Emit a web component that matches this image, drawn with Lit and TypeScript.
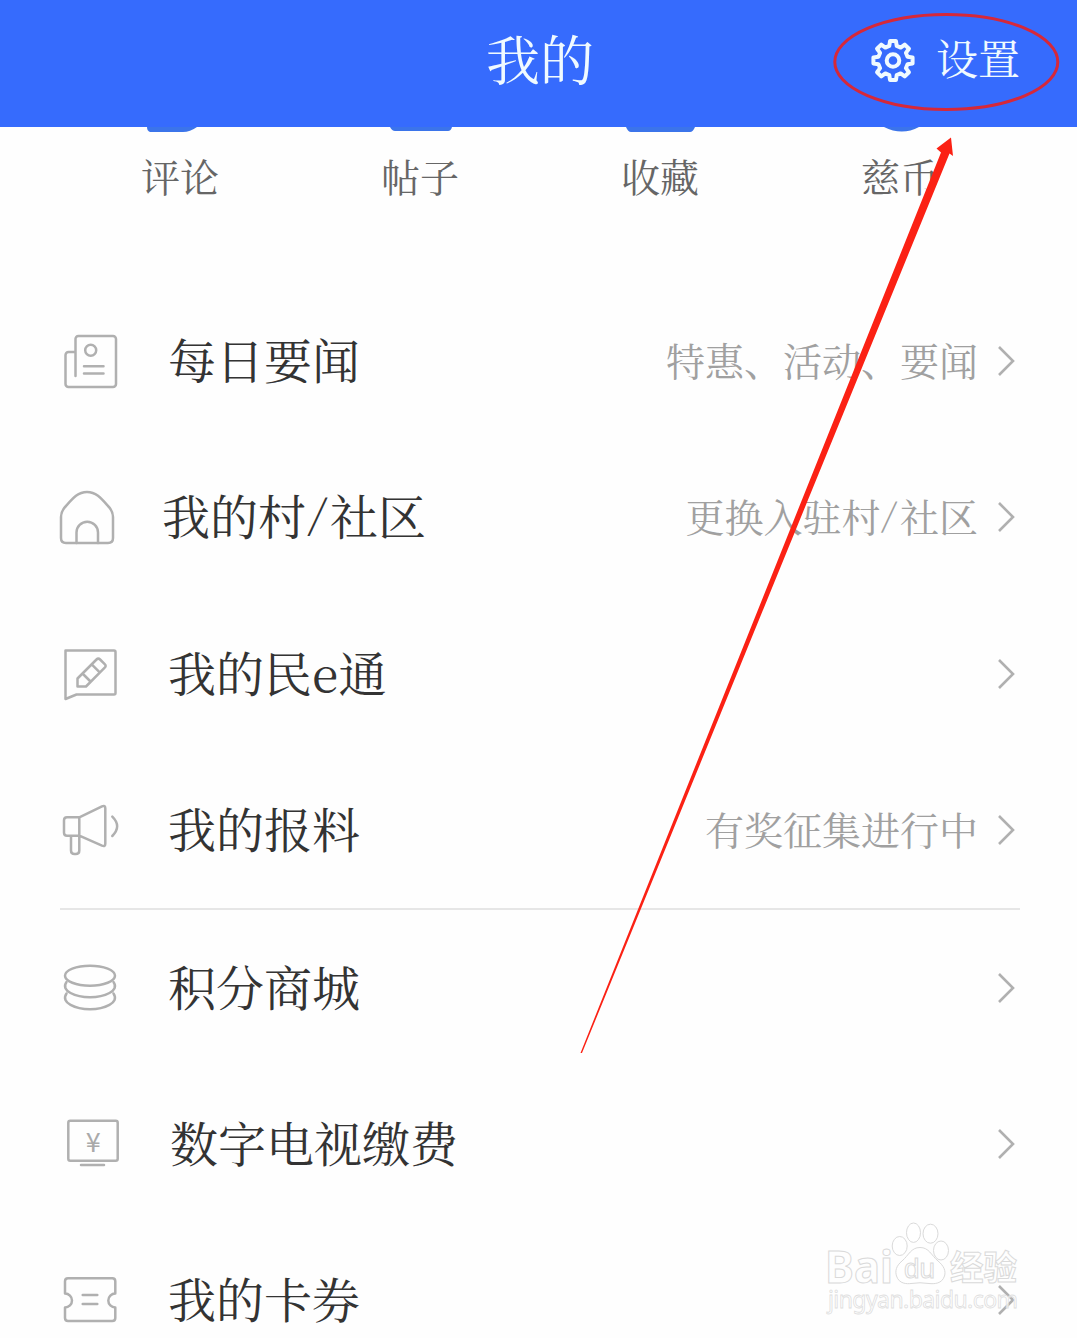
import { LitElement, html, css, svg } from "lit";
import { customElement } from "lit/decorators.js";

const gearPath = (cx: number, cy: number, outer: number, inner: number): string => {
  const points: string[] = [];
  for (let i = 0; i < 8; i++) {
    const base = (i * Math.PI) / 4 - Math.PI / 2;
    const corners: [number, number][] = [
      [-0.25, inner],
      [-0.15, outer],
      [0.15, outer],
      [0.25, inner],
    ];
    for (const [offset, radius] of corners) {
      const x = cx + Math.cos(base + offset) * radius;
      const y = cy + Math.sin(base + offset) * radius;
      points.push(`${x.toFixed(2)} ${y.toFixed(2)}`);
    }
  }
  return `M${points.join("L")}Z`;
};

const icons = {
  news: svg`<path d="M17.5 47V10.5a3 3 0 0 1 3-3.500h34.500a3 3 0 0 1 3 3V55a3 3 0 0 1-3 3H10.500a3 3 0 0 1-3-3V26a3 3 0 0 1 3-3h7"/>
    <circle cx="32.700" cy="21.300" r="5.500"/><path d="M26 37.300h19.500M26 44.500h19.500"/>`,
  house: svg`<path d="M3 53V32C3 27 5 24 8 21C15 13 20 7 29 7S43 13 50 21C53 24 55 27 55 32V53Q55 58 50 58H8Q3 58 3 53Z"/>
    <path d="M18.500 58V47.500a10.700 10.700 0 0 1 21.500 0V58"/>`,
  note: svg`<path d="M7.500 57V8.500h48.500q1.500 0 1.500 1.500v41q0 1.500-1.500 1.500H18.500Z"/>
    <path d="M19.500 44.500V36.500L38.500 17.500q1.800-1.800 3.600 0l4.600 4.600q1.800 1.800 0 3.600L28 44.500ZM24.500 31.500l8 8M33.700 22.300l8 8"/>`,
  horn: svg`<path d="M21.300 19.300H9q-3 0-3 3v12.400q0 3 3 3h12.300ZM21.300 19.300L44 8.300q3.300-1.300 3.300 2v35.400q0 3.300-3.300 2L21.300 37.700M13 37.700V52.500q0 3.500 3.500 3.500h1.300q3.500 0 3.500-3.500V37.700"/>
    <path d="M54.300 18.700Q64 28.300 54.300 38"/>`,
  coins: svg`<ellipse cx="32" cy="19.700" rx="25" ry="10"/>
    <path d="M8.500 26C2 35 18 41.300 32 41.300S62 35 55.500 26M8.500 37.500C2 47 18 53.300 32 53.300S62 47 55.500 37.500"/>`,
  tv: svg`<rect x="10.300" y="8.700" width="49.400" height="40" rx="2"/><path d="M23 53h23"/>
    <text class="yen" x="35.200" y="39.500" text-anchor="middle">¥</text>`,
  ticket: svg`<path d="M10 10.300h44.300q3 0 3 3V25.500a7 7 0 0 0 0 14V50q0 3-3 3H10q-3 0-3-3V39.500a7 7 0 0 0 0-14V13.300q0-3 3-3Z"/>
    <path d="M24.700 27h14.600M24.700 36h14.600"/>`,
};

interface Entry {
  icon: keyof typeof icons;
  title: string;
  hint?: string;
  shift?: string;
}

const groups: Entry[][] = [
  [
    { icon: "news", title: "每日要闻", hint: "特惠、活动、要闻" },
    { icon: "house", title: "我的村/社区", hint: "更换入驻村/社区", shift: "back" },
    { icon: "note", title: "我的民e通" },
    { icon: "horn", title: "我的报料", hint: "有奖征集进行中" },
  ],
  [
    { icon: "coins", title: "积分商城" },
    { icon: "tv", title: "数字电视缴费", shift: "forward" },
    { icon: "ticket", title: "我的卡券" },
  ],
];

const tabs = [
  { label: "评论", edge: "M7 0H57Q50 5 43 5H10Q7 4 7 0Z" },
  { label: "帖子", edge: "M10 0H72Q71 4 68 4H15Q12 4 10 0Z" },
  { label: "收藏", edge: "M6 0H75Q73 5 70 5H11Q8 5 6 0Z" },
  { label: "慈币", edge: "M24 0H59Q42 9 24 0Z" },
];

const mixed = (text: string) =>
  text.split(/([a-z/])/).map((part) => {
    if (part === "/") return html`<span class="slash">/</span>`;
    return /^[a-z]$/.test(part) ? html`<span class="latin">${part}</span>` : part;
  });

@customElement("app-root")
export class AppRoot extends LitElement {
  static styles = css`
    :host {
      display: block;
      position: relative;
      width: 1077px;
      height: 1338px;
      overflow: hidden;
      background: #fefefe;
      color: #333;
      font-family: "Noto Serif CJK SC", "Noto Sans CJK SC", serif;
      font-weight: 400;
    }
    * {
      box-sizing: border-box;
    }
    .header {
      display: grid;
      grid-template-columns: 1fr auto 1fr;
      align-items: center;
      height: 127px;
      padding: 0 57px 8px 60px;
      background: #366bfd;
      color: #f0faff;
    }
    .title {
      grid-column: 2;
      padding-bottom: 4px;
      font-size: 54px;
      line-height: 80px;
    }
    .settings {
      display: flex;
      justify-content: flex-end;
      align-items: center;
      gap: 20px;
      font-size: 42px;
      line-height: 60px;
    }
    .settings-label {
      padding-bottom: 5px;
    }
    .gear {
      width: 46px;
      height: 46px;
      fill: none;
      stroke: #f0faff;
      stroke-width: 4;
      stroke-linejoin: round;
    }
    .tabs {
      display: grid;
      grid-template-columns: repeat(4, 240px);
      height: 156px;
      padding-left: 60px;
    }
    .tab {
      display: flex;
      flex-direction: column;
      align-items: center;
      gap: 13px;
      font-size: 39px;
      line-height: 58px;
      color: #666;
    }
    .edge {
      width: 80px;
      height: 6px;
      fill: #3b74ea;
    }
    .group {
      margin: 0 57px 0 60px;
    }
    .group + .group {
      border-top: 2px solid #e6e6e6;
    }
    .row {
      display: flex;
      align-items: center;
      height: 156.25px;
      margin-left: -2px;
    }
    .group + .group .row {
      height: 156px;
    }
    .icon {
      flex: none;
      width: 64px;
      height: 64px;
      fill: none;
      stroke: #b0b0b0;
      stroke-width: 2.5;
      stroke-linecap: round;
      stroke-linejoin: round;
    }
    .yen {
      fill: #aaa;
      stroke: none;
      font: 27px "Noto Sans CJK SC", sans-serif;
    }
    .name {
      flex: 1;
      margin-left: 46px;
      padding-bottom: 4px;
      font-size: 48px;
      line-height: 70px;
      white-space: nowrap;
    }
    .back {
      margin-left: 40px;
    }
    .forward {
      margin-left: 48px;
    }
    .latin,
    .slash {
      display: inline-block;
      width: 0.55em;
      text-align: center;
    }
    .slash {
      width: 0.5em;
      transform: translateY(-0.06em) skewX(-6deg) scaleY(0.85);
    }
    .hint {
      padding-bottom: 4px;
      font-size: 39px;
      line-height: 58px;
      color: #a0a0a0;
      white-space: nowrap;
    }
    .chevron {
      flex: none;
      width: 20px;
      height: 32px;
      margin: 0 3px 0 19px;
      fill: none;
      stroke: #b0b0b0;
      stroke-width: 2.6;
    }
    .overlay {
      position: absolute;
      inset: 0;
      width: 1077px;
      height: 1338px;
      pointer-events: none;
    }
    .ring {
      fill: none;
      stroke: #d62839;
      stroke-width: 3;
    }
    .arrow {
      fill: #fb2114;
    }
    .mark {
      fill: #fff;
      fill-opacity: 0.9;
      stroke: #dadada;
      stroke-width: 1;
    }
    .brand {
      font: 700 44px "Noto Sans", sans-serif;
    }
    .paw-text {
      font: 400 28px "Liberation Sans", sans-serif;
    }
    .brand-cn {
      font: 700 34px "Noto Sans CJK SC", sans-serif;
    }
    .site {
      font: 400 23px "Noto Sans", sans-serif;
      fill-opacity: 0.7;
      stroke: #dedede;
      stroke-width: 0.8;
    }
  `;

  private renderRow(entry: Entry) {
    return html`<div class="row">
      <svg class="icon" viewBox="0 0 64 64">${icons[entry.icon]}</svg>
      <span class="name ${entry.shift ?? ""}">${mixed(entry.title)}</span>
      ${entry.hint ? html`<span class="hint">${mixed(entry.hint)}</span>` : ""}
      <svg class="chevron" viewBox="0 0 20 32"><path d="M2 2L16 16L2 30" /></svg>
    </div>`;
  }

  render() {
    return html`
      <header class="header">
        <span class="title">我的</span>
        <div class="settings">
          <svg class="gear" viewBox="0 0 46 46">
            <path d=${gearPath(23, 23.5, 19.8, 15)} />
            <circle cx="23" cy="23.500" r="6.300" />
          </svg>
          <span class="settings-label">设置</span>
        </div>
      </header>
      <nav class="tabs">
        ${tabs.map(
          (tab) => html`<div class="tab">
            <svg class="edge" viewBox="0 0 80 6"><path d=${tab.edge} /></svg>
            <span>${tab.label}</span>
          </div>`,
        )}
      </nav>
      ${groups.map((group) => html`<section class="group">${group.map((entry) => this.renderRow(entry))}</section>`)}
      <svg class="overlay" viewBox="0 0 1077 1338">
        <g class="mark">
          <text class="brand" x="825" y="1283" textLength="68" lengthAdjust="spacingAndGlyphs">Bai</text>
          <ellipse cx="899.700" cy="1246" rx="7.500" ry="9.500" />
          <ellipse cx="913.500" cy="1232.700" rx="7" ry="9.700" />
          <ellipse cx="930.500" cy="1233.700" rx="7.500" ry="9.500" />
          <ellipse cx="941" cy="1250.500" rx="7.500" ry="9.500" />
          <path d="M920 1247.500C911 1247.500 909 1255 902 1261C896 1266 895 1271 896.500 1276C899 1284 907 1284 911 1283.500Q920 1282 929 1283.500C934 1284 942 1284 944.500 1276C946 1271 944 1266 938 1261C931 1255 929 1247.500 920 1247.500Z" />
          <text class="paw-text" x="904" y="1277.500" textLength="31" lengthAdjust="spacingAndGlyphs">du</text>
          <text class="brand-cn" x="950" y="1280" textLength="67" lengthAdjust="spacingAndGlyphs">经验</text>
          <text class="site" x="828" y="1308" textLength="190">jingyan.baidu.com</text>
        </g>
        <ellipse class="ring" cx="946.300" cy="62" rx="111.500" ry="47.500" />
        <path class="arrow" d="M580.500 1053L941 152.500L936.500 148.500L951 137.500L953 156L949.500 153.500L582 1053Z" />
      </svg>
    `;
  }
}
